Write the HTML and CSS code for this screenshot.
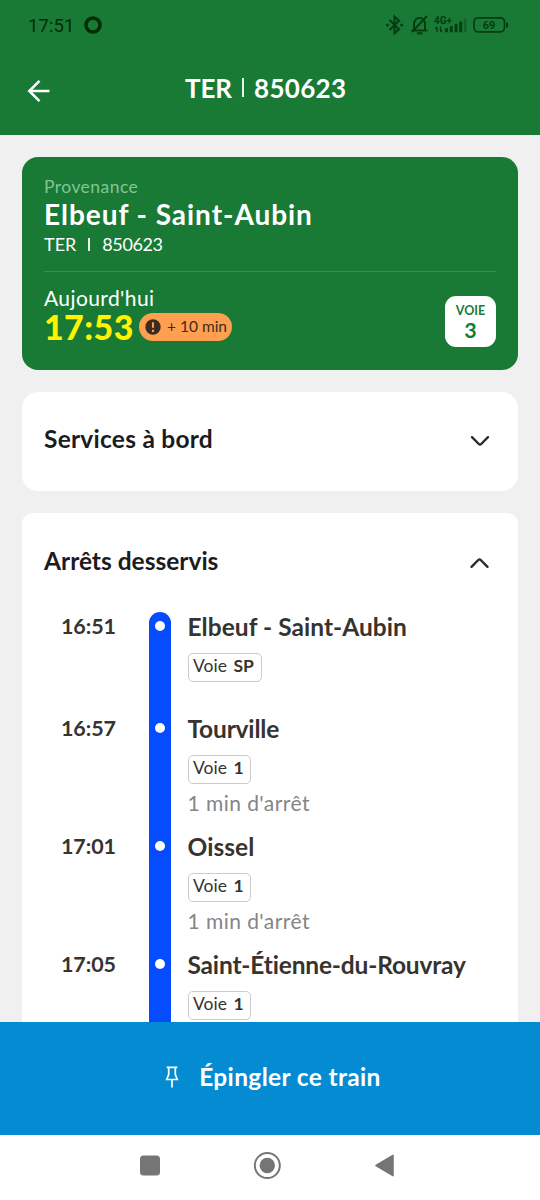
FILE: index.html
```html
<!DOCTYPE html>
<html lang="fr">
<head>
<meta charset="utf-8">
<title>TER 850623</title>
<link rel="stylesheet" href="styles.css">
</head>
<body>
<div class="screen">
  <header class="header">
    <div class="status">
      <span class="clock">17:51</span>
      <svg class="ring" width="18" height="18" viewBox="0 0 18 18"><circle cx="9" cy="9" r="7" fill="none" stroke="#032d08" stroke-width="3.6"/></svg>
      <svg class="status-icons" width="126" height="24" viewBox="384 13 126 24" fill="none" stroke="#073c12">
        <path d="M389.500 20 399 29.200 394.500 33.500V16.500L399 20.800 389.500 30" stroke-width="2"/>
        <circle cx="387.400" cy="25" r="1.500" fill="#073c12" stroke="none"/><circle cx="401.700" cy="25" r="1.500" fill="#073c12" stroke="none"/>
        <path d="M411.500 30.500h16M414 30.500v-6c0-3.500 2-6.500 5.500-6.500s5.500 3 5.500 6.500v6M412 32l15-16" stroke-width="2"/>
        <path d="M417 33.300h5.500" stroke-width="2.200"/>
        <text x="434" y="24.300" class="network">4G+</text>
        <path d="M437 27v5.300M440.500 26.500v5.300M435.500 29l1.500-2M442 30l-1.500 2" stroke-width="1.300"/>
        <path d="M446.500 32.300v-4M451.300 32.300v-6M456.100 32.300v-8.500M460.700 32.300v-10.800" stroke-width="3"/>
        <path d="M465.200 32.300V19" stroke="#12602a" stroke-width="2.600"/>
        <rect x="474" y="17.800" width="30.500" height="14" rx="4" stroke-width="1.700"/>
        <path d="M507 22.500v5" stroke-width="2"/>
        <text x="489" y="29.300" text-anchor="middle" class="battery">69</text>
      </svg>
    </div>
    <div class="titlebar">
      <svg class="back" width="24" height="24" viewBox="0 0 24 24" fill="none" stroke="#fff" stroke-width="2.500"><path d="M22.500 12H2.500M12.500 1.800 2.300 12l10.200 10.200"/></svg>
      <h1 class="title"><span class="t-name">TER</span><i class="bar"></i><span class="t-num">850623</span></h1>
    </div>
  </header>

  <main class="content">
    <section class="summary">
      <p class="label">Provenance</p>
      <h2 class="station">Elbeuf - Saint-Aubin</h2>
      <p class="train"><span>TER</span><i class="bar small"></i><span class="train-num">850623</span></p>
      <div class="when">
        <div>
          <p class="day">Aujourd'hui</p>
          <div class="arrival">
            <span class="hour">17:53</span>
            <span class="delay">
              <svg width="16" height="16" viewBox="0 0 16 16"><circle cx="8" cy="8" r="7.700" fill="#3d2b20"/><path d="M8 3.200v5.600M8 10.800v2.200" stroke="#ffa050" stroke-width="2.100"/></svg>
              <span class="delay-text">+ 10 min</span>
            </span>
          </div>
        </div>
        <div class="platform"><span class="p-label">VOIE</span><span class="p-num">3</span></div>
      </div>
    </section>

    <section class="panel closed">
      <h3 class="services">Services à bord</h3>
      <svg class="chevron" width="22" height="14" viewBox="0 0 22 14"><path d="M3 3.200 9.800 10q1.200 1.200 2.400 0L19 3.200"/></svg>
    </section>

    <section class="panel open">
      <div class="panel-head">
        <h3 class="served">Arrêts desservis</h3>
        <svg class="chevron" width="22" height="14" viewBox="0 0 22 14"><path d="M2.500 10.800 9.300 4q1.200-1.200 2.400 0l6.800 6.800"/></svg>
      </div>
      <ol class="stops">
        <li class="stop first"><time>16:51</time><div class="line"><i></i></div><div class="info"><p class="name">Elbeuf - Saint-Aubin</p><span class="tag wide">Voie <b>SP</b></span></div></li>
        <li class="stop"><time>16:57</time><div class="line"><i></i></div><div class="info"><p class="name snug">Tourville</p><span class="tag">Voie <b>1</b></span><p class="wait">1 min d'arrêt</p></div></li>
        <li class="stop"><time>17:01</time><div class="line"><i></i></div><div class="info"><p class="name">Oissel</p><span class="tag">Voie <b>1</b></span><p class="wait">1 min d'arrêt</p></div></li>
        <li class="stop"><time>17:05</time><div class="line"><i></i></div><div class="info"><p class="name snug">Saint-Étienne-du-Rouvray</p><span class="tag">Voie <b>1</b></span></div></li>
      </ol>
    </section>
  </main>

  <button class="pin">
    <svg width="14" height="22" viewBox="0 0 14 22" fill="none" stroke="#fff" stroke-width="1.700"><path d="M1.700 1.300h10.600M3.700 1.300v7.400l-2 4.800h10.600l-2-4.800V1.300M7 13.500V21.500"/></svg>
    <span>Épingler ce train</span>
  </button>
  <nav class="nav">
    <svg width="540" height="65" viewBox="0 0 540 65" fill="#757575">
      <rect x="140" y="20.500" width="20" height="20" rx="3.500"/>
      <circle cx="267.300" cy="30.500" r="12.500" fill="none" stroke="#757575" stroke-width="2"/><circle cx="267.300" cy="30.500" r="7.700"/>
      <path d="M376 30.500 393 20.300V40.700Z" stroke="#757575" stroke-width="1.500" stroke-linejoin="round"/>
    </svg>
  </nav>
</div>
</body>
</html>
```
FILE: styles.css
```css
* { box-sizing: border-box; margin: 0; padding: 0; }
body { background: #f0f0f0; font-family: Lato, "Open Sans", sans-serif; color: #37332f; }
.screen { width: 540px; height: 1200px; display: flex; flex-direction: column; overflow: hidden; }
.header { height: 135px; flex: none; background: #197a36; }
.status { height: 50px; display: flex; align-items: center; padding: 0 30px 0 28px; }
.clock { font: 400 18.5px/20px Roboto, sans-serif; color: #032d08; letter-spacing: 0.1px; width: 56px; padding-top: 1px; }
.status-icons { margin-left: auto; }
.network { font: 700 10px Roboto, sans-serif; fill: #073c12; stroke: none; }
.battery { font: 700 11px Roboto, sans-serif; fill: #073c12; stroke: none; }
.titlebar { height: 85px; display: grid; grid-template-columns: 158px 1fr; padding: 23px 0 0 27px; }
.back { margin-top: 6px; }
.title { display: flex; align-items: flex-start; color: #fff; font-size: 26px; line-height: 30px; font-weight: 700; }
.t-name { width: 47px; letter-spacing: -0.2px; }
.bar { width: 1.500px; height: 19px; margin: 5px 10.500px 0 10px; background: #e5f4e8; flex: none; }
.t-num { letter-spacing: 0.3px; }
.content { flex: 1; min-height: 0; padding: 22px 22px 0; display: flex; flex-direction: column; gap: 22px; overflow: hidden; }
.summary { height: 213px; flex: none; padding: 19px 22px 0; border-radius: 16px; background: #197a36; color: #fff; }
.label { font-size: 17.500px; line-height: 22px; color: #84c592; letter-spacing: 0.45px; }
.station { font-size: 28px; line-height: 32px; padding-bottom: 2px; font-weight: 700; letter-spacing: 0.95px; }
.train { display: flex; font-size: 18px; line-height: 25px; }
.train-num { letter-spacing: -0.4px; }
.bar.small { height: 13px; margin: 6px 12px 0; width: 2px; }
.when { margin-top: 14px; padding-top: 14px; border-top: 1px solid #368d4d; display: flex; justify-content: space-between; }
.day { font-size: 21px; line-height: 24px; letter-spacing: 0.4px; }
.arrival { display: flex; align-items: center; gap: 6px; height: 34px; margin-top: -1px; padding-top: 1px; }
.hour { width: 89px; padding-top: 1px; font-size: 34px; line-height: 34px; font-weight: 900; color: #fff300; letter-spacing: 0.4px; }
.delay { display: flex; align-items: center; gap: 6px; width: 93px; height: 28px; padding-left: 6px; border-radius: 14px; background: #ffa050; color: #3d2b20; }
.delay-text { font-size: 15.500px; line-height: 24px; height: 26px; white-space: nowrap; }
.platform { width: 51px; height: 51px; margin-top: 10px; padding-top: 6px; border-radius: 11px; background: #fff; color: #197a36; display: flex; flex-direction: column; align-items: center; font-weight: 700; }
.p-label { font-size: 12.500px; line-height: 17px; }
.p-num { font-size: 21.500px; line-height: 23px; }
.panel { background: #fff; flex: none; padding: 0 27px 0 22px; }
.panel h3 { font-size: 24.500px; line-height: 30px; font-weight: 700; color: #1c1b20; padding-bottom: 4px; box-sizing: content-box; }
.panel .services { letter-spacing: 0.25px; }
.chevron { fill: none; stroke: #2b2b2b; stroke-width: 2.400; stroke-linecap: round; }
.closed { height: 99px; border-radius: 16px; display: flex; justify-content: space-between; align-items: center; padding-bottom: 2px; }
.open { border-radius: 11px 11px 0 0; }
.panel-head { height: 99px; display: flex; justify-content: space-between; align-items: center; }
.stops { list-style: none; }
.stop { height: 118px; display: grid; grid-template-columns: 105px 22px 1fr; }
.stop.first { height: 102px; }
.stop time { padding-left: 17px; font-size: 21.500px; line-height: 28px; font-weight: 700; letter-spacing: -0.1px; }
.line { background: #064cff; display: flex; justify-content: center; padding-top: 9px; }
.first .line { border-radius: 11px 11px 0 0; }
.line i { width: 10px; height: 10px; border-radius: 50%; background: #fff; }
.info { padding-left: 16.500px; white-space: nowrap; }
.name { font-size: 24.500px; line-height: 29px; font-weight: 700; letter-spacing: 0.04px; }
.name.snug { letter-spacing: -0.17px; }
.tag { display: block; width: 63px; height: 29px; margin-top: 11.500px; padding-left: 4.500px; border: 1.500px solid #ccc; border-radius: 5px; font-size: 17.500px; line-height: 23px; }
.tag b { margin-left: 2px; }
.tag.wide { width: 74.500px; }
.wait { margin-top: 5.500px; font-size: 21px; line-height: 28px; letter-spacing: 0.45px; color: #858585; }
.pin { height: 113px; flex: none; border: 0; padding: 0 0 3px 6px; background: #048bd1; color: #fff; display: flex; align-items: center; justify-content: center; gap: 20px; font-family: inherit; font-size: 24.500px; line-height: 30px; font-weight: 700; letter-spacing: 0.35px; }
.nav { height: 65px; flex: none; background: #fff; }
```
